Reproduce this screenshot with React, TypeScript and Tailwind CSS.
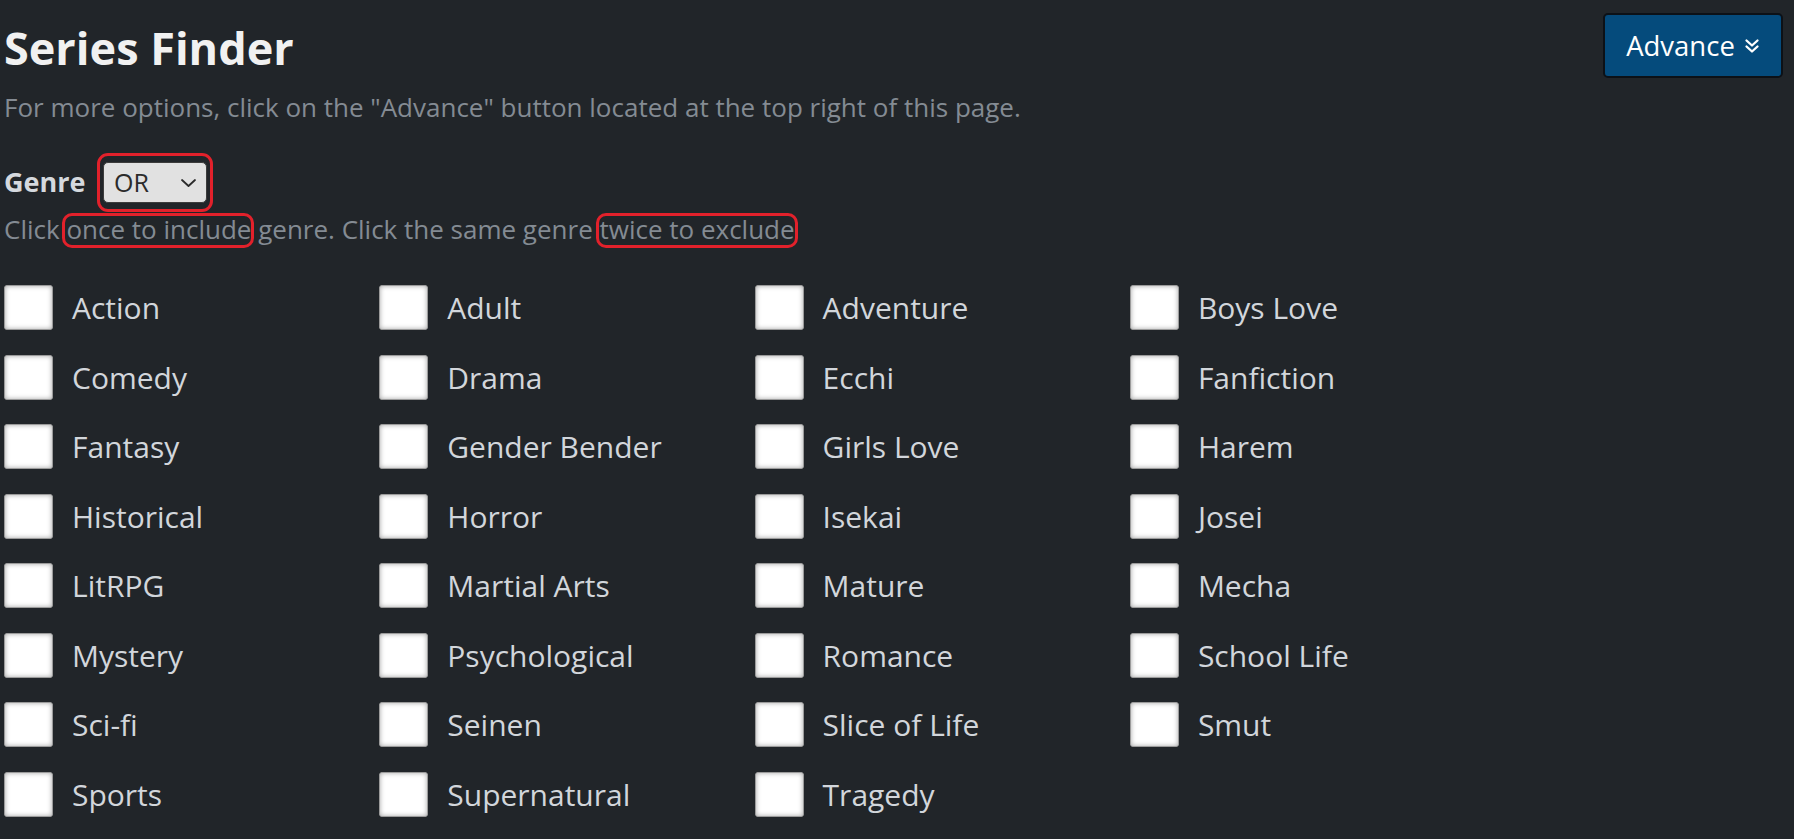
import React from "react";

const genres = [
  "Action", "Adult", "Adventure", "Boys Love",
  "Comedy", "Drama", "Ecchi", "Fanfiction",
  "Fantasy", "Gender Bender", "Girls Love", "Harem",
  "Historical", "Horror", "Isekai", "Josei",
  "LitRPG", "Martial Arts", "Mature", "Mecha",
  "Mystery", "Psychological", "Romance", "School Life",
  "Sci-fi", "Seinen", "Slice of Life", "Smut",
  "Sports", "Supernatural", "Tragedy",
];

function Marked({ children }: { children: React.ReactNode }) {
  return (
    <span className="relative">
      {children}
      <span className="absolute left-[-4px] right-[-3px] top-[2px] bottom-[-1px] border-[3px] border-[#e2212b] rounded-[10px] pointer-events-none" />
    </span>
  );
}

export default function App() {
  return (
    <div
      className="min-h-[839px] w-full bg-[#212529] text-[#ced4da]"
      style={{ fontFamily: '"Open Sans", "Noto Sans", sans-serif' }}
    >
      <div className="flex justify-between items-start pl-[4px] pr-[11px] pt-[13px]">
        <h1 className="mt-[8px] text-[45px] leading-[54px] font-bold text-[#f1f1f1]">Series Finder</h1>
        <button className="w-[180px] h-[65px] rounded-[5px] bg-[#054b7c] border-2 border-[#0c1117] text-white text-[27.5px] flex items-center justify-center gap-[9px]">
          <span>Advance</span>
          <svg width="16" height="16" viewBox="0 0 16 16" fill="none" stroke="white" strokeWidth="2.3" strokeLinecap="round" strokeLinejoin="round">
            <polyline points="2.5,2.5 8,7.5 13.5,2.5" />
            <polyline points="2.5,8.5 8,13.5 13.5,8.5" />
          </svg>
        </button>
      </div>
      <p className="mt-[10px] pl-[4px] text-[26px] leading-[39px] text-[#848b93]">
        For more options, click on the "Advance" button located at the top right of this page.
      </p>
      <div className="mt-[26px] pl-[4px] flex items-center">
        <span className="w-[93px] text-[27px] font-bold text-[#d5d9de]">Genre</span>
        <div className="border-[3px] border-[#e2212b] rounded-[11px] px-[3px] py-[6px]">
          <div className="w-[104px] h-[41px] bg-[#e1e1e1] border border-[#3c3c3c] rounded-[5px] flex items-center justify-between pl-[10px] pr-[9px]">
            <span className="text-[25px] text-[#2b2b2b] leading-none">OR</span>
            <svg width="17" height="10" viewBox="0 0 17 10" fill="none" stroke="#2b2b2b" strokeWidth="1.8" strokeLinecap="round" strokeLinejoin="round">
              <polyline points="2,2 8.5,8 15,2" />
            </svg>
          </div>
        </div>
      </div>
      <p className="mt-[-2px] pl-[4px] text-[26px] leading-[39px] text-[#848b93]">
        Click <Marked>once to include</Marked> genre. Click the same genre <Marked>twice to exclude</Marked>
      </p>
      <div className="mt-[36px] pl-[4px] grid grid-cols-[repeat(4,375.3px)] gap-y-[24.5px] pb-[20px]">
        {genres.map((g) => (
          <label key={g} className="flex items-center gap-[19px]">
            <span className="w-[49px] h-[45px] bg-white border border-[#9b9b9b] rounded-[3px] shadow-[inset_0_0_5px_rgba(0,0,0,0.35)] shrink-0" />
            <span className="text-[30px] text-[#d2d6db]">{g}</span>
          </label>
        ))}
      </div>
    </div>
  );
}
